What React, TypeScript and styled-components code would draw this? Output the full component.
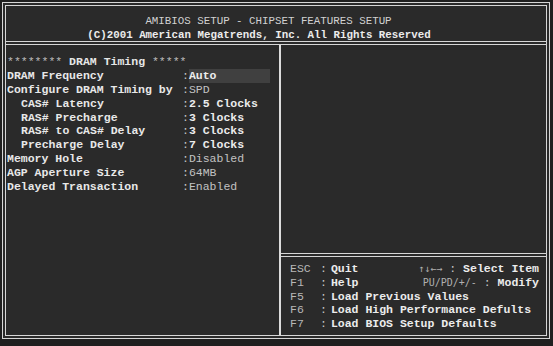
import React from "react";
import styled, { createGlobalStyle } from "styled-components";

const GlobalStyle = createGlobalStyle`
  html, body {
    margin: 0;
    padding: 0;
    background: #1f1f1f;
  }
  * {
    box-sizing: border-box;
  }
`;

const settings = [
  { label: "DRAM Frequency", value: "Auto", bright: true, selected: true },
  { label: "Configure DRAM Timing by", value: "SPD" },
  { label: "CAS# Latency", value: "2.5 Clocks", bright: true, indent: true },
  { label: "RAS# Precharge", value: "3 Clocks", bright: true, indent: true },
  { label: "RAS# to CAS# Delay", value: "3 Clocks", bright: true, indent: true },
  { label: "Precharge Delay", value: "7 Clocks", bright: true, indent: true },
  { label: "Memory Hole", value: "Disabled" },
  { label: "AGP Aperture Size", value: "64MB" },
  { label: "Delayed Transaction", value: "Enabled" },
];

const helpKeys = [
  { key: "ESC", text: "Quit", right: { key: "↑↓←→", text: "Select Item" } },
  { key: "F1", text: "Help", right: { key: "PU/PD/+/-", text: "Modify" } },
  { key: "F5", text: "Load Previous Values" },
  { key: "F6", text: "Load High Performance Defults" },
  { key: "F7", text: "Load BIOS Setup Defaults" },
];

const App = () => {
  return (
    <Page>
      <GlobalStyle />
      <Frame>
        <Header>
          <HeaderLine shift={15} thin>
            AMIBIOS SETUP - CHIPSET FEATURES SETUP
          </HeaderLine>
          <HeaderLine shift={34}>
            (C)2001 American Megatrends, Inc. All Rights Reserved
          </HeaderLine>
        </Header>
        <Body>
          <LeftPanel>
            <TitleRow>
              <Stars>********</Stars> DRAM Timing <Stars>*****</Stars>
            </TitleRow>
            {settings.map((s) => (
              <SettingRow key={s.label}>
                <Label indent={s.indent}>{s.label}</Label>
                <ValueCell>
                  <Colon>:</Colon>
                  <Value bright={s.bright} selected={s.selected}>
                    {s.value}
                  </Value>
                </ValueCell>
              </SettingRow>
            ))}
          </LeftPanel>
          <RightPanel>
            <HelpBox>
              {helpKeys.map((h) => (
                <HelpRow key={h.key}>
                  <HelpItem>
                    <KeyName>{h.key}</KeyName>
                    <Colon>:</Colon>
                    <Action gap={4}>{h.text}</Action>
                  </HelpItem>
                  {h.right && (
                    <HelpItem>
                      <DimText>{h.right.key}</DimText>
                      <Colon>{" : "}</Colon>
                      <Action>{h.right.text}</Action>
                    </HelpItem>
                  )}
                </HelpRow>
              ))}
            </HelpBox>
          </RightPanel>
        </Body>
      </Frame>
    </Page>
  );
};

export default App;

const Page = styled.div`
  width: 553px;
  height: 346px;
  padding: 2px 3px 7px 2px;
  background: #1f1f1f;
  font-family: "Liberation Mono", "DejaVu Sans Mono", monospace;
`;

const Frame = styled.div`
  width: 548px;
  height: 337px;
  border: 4px double #d6d6d6;
  background: #2a2a2a;
  display: flex;
  flex-direction: column;
`;

const Header = styled.div`
  height: 39px;
  border-bottom: 4px double #d6d6d6;
  padding-top: 9px;
  display: flex;
  flex-direction: column;
`;

const HeaderLine = styled.div<{ shift: number; thin?: boolean }>`
  text-align: center;
  padding-right: ${(p) => p.shift}px;
  font-size: 10.8px;
  line-height: 13.5px;
  height: 13.5px;
  white-space: pre;
  color: ${(p) => (p.thin ? "#d2d2d2" : "#ececec")};
  font-weight: ${(p) => (p.thin ? 400 : 700)};
`;

const Body = styled.div`
  flex: 1;
  display: flex;
`;

const LeftPanel = styled.div`
  width: 275px;
  border-right: 2px solid #dcdcdc;
  padding: 10px 0 0 1px;
  display: flex;
  flex-direction: column;
  font-size: 11.5px;
  line-height: 13.9px;
`;

const TitleRow = styled.div`
  height: 13.9px;
  color: #e6e6e6;
  font-weight: 700;
  white-space: pre;
`;

const Stars = styled.span`
  color: #bdbdbd;
  font-weight: 400;
`;

const SettingRow = styled.div`
  height: 13.9px;
  display: grid;
  grid-template-columns: 175px 1fr;
  white-space: pre;
`;

const Label = styled.span<{ indent?: boolean }>`
  color: #e8e8e8;
  font-weight: 700;
  padding-left: ${(p) => (p.indent ? "14px" : "0")};
`;

const ValueCell = styled.span`
  display: flex;
  padding-right: 9px;
`;

const Colon = styled.span`
  color: #c4c4c4;
  white-space: pre;
`;

const Value = styled.span<{ bright?: boolean; selected?: boolean }>`
  flex: 1;
  color: ${(p) => (p.bright ? "#ececec" : "#c2c2c2")};
  font-weight: ${(p) => (p.bright ? 700 : 400)};
  background: ${(p) => (p.selected ? "#404040" : "transparent")};
`;

const RightPanel = styled.div`
  flex: 1;
  display: flex;
  flex-direction: column;
  justify-content: flex-end;
`;

const HelpBox = styled.div`
  height: 82px;
  border-top: 4px double #d6d6d6;
  padding: 5px 7px 0 9px;
  font-size: 11.5px;
  line-height: 13.8px;
`;

const HelpRow = styled.div`
  height: 13.8px;
  display: flex;
  justify-content: space-between;
  white-space: pre;
`;

const HelpItem = styled.span`
  white-space: pre;
`;

const KeyName = styled.span`
  display: inline-block;
  width: 30px;
  color: #b8b8b8;
`;

const DimText = styled.span`
  color: #b0b0b0;
  font-family: "DejaVu Sans Mono", "Liberation Mono", monospace;
  font-size: 10px;
`;

const Action = styled.span<{ gap?: number }>`
  margin-left: ${(p) => p.gap ?? 0}px;
  color: #ececec;
  font-weight: 700;
`;
